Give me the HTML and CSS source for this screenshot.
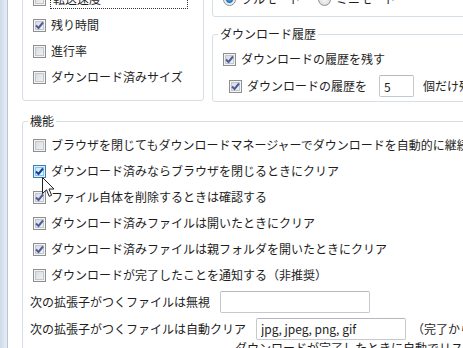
FILE: index.html
```html
<!DOCTYPE html>
<html lang="ja">
<head>
    <meta charset="UTF-8">
    <title>オプション</title>
    <link rel="stylesheet" href="styles.css">
</head>
<body>
    <div class="window">
        <div class="frame"></div>
        <div class="client">
            <div class="top-row">
                <div class="group columns-box">
                    <div class="check-row"><span class="cb"></span><span class="focus">転送速度</span></div>
                    <div class="check-row"><span class="cb checked"><svg viewBox="0 0 11 11"><polyline points="2,5.5 4.5,8 9,2.5"/></svg></span>残り時間</div>
                    <div class="check-row"><span class="cb"></span>進行率</div>
                    <div class="check-row"><span class="cb"></span>ダウンロード済みサイズ</div>
                </div>
                <div class="right-col">
                    <div class="group mode-box">
                        <div class="radio-row">
                            <span class="radio on"></span><span class="radio-label">フルモード</span>
                            <span class="radio"></span><span class="radio-label">ミニモード</span>
                        </div>
                    </div>
                    <fieldset class="group history">
                        <legend>ダウンロード履歴</legend>
                        <div class="check-row"><span class="cb checked"><svg viewBox="0 0 11 11"><polyline points="2,5.5 4.5,8 9,2.5"/></svg></span>ダウンロードの履歴を残す</div>
                        <div class="check-row count-row">
                            <span class="cb checked"><svg viewBox="0 0 11 11"><polyline points="2,5.5 4.5,8 9,2.5"/></svg></span>ダウンロードの履歴を
                            <input class="text-box count" type="text" value="5">
                            <span class="after">個だけ残す</span>
                        </div>
                    </fieldset>
                </div>
            </div>

            <fieldset class="group features">
                <legend>機能</legend>
                <div class="check-row"><span class="cb"></span>ブラウザを閉じてもダウンロードマネージャーでダウンロードを自動的に継続する</div>
                <div class="check-row"><span class="cb checked hot"><svg viewBox="0 0 11 11"><polyline points="2,5.5 4.5,8 9,2.5"/></svg></span>ダウンロード済みならブラウザを閉じるときにクリア</div>
                <div class="check-row"><span class="cb checked"><svg viewBox="0 0 11 11"><polyline points="2,5.5 4.5,8 9,2.5"/></svg></span>ファイル自体を削除するときは確認する</div>
                <div class="check-row"><span class="cb checked"><svg viewBox="0 0 11 11"><polyline points="2,5.5 4.5,8 9,2.5"/></svg></span>ダウンロード済みファイルは開いたときにクリア</div>
                <div class="check-row"><span class="cb checked"><svg viewBox="0 0 11 11"><polyline points="2,5.5 4.5,8 9,2.5"/></svg></span>ダウンロード済みファイルは親フォルダを開いたときにクリア</div>
                <div class="check-row"><span class="cb"></span>ダウンロードが完了したことを通知する（非推奨）</div>
                <div class="field-row">
                    <span>次の拡張子がつくファイルは無視</span>
                    <input class="text-box wide" type="text" value="">
                </div>
                <div class="field-row">
                    <span>次の拡張子がつくファイルは自動クリア</span>
                    <input class="text-box wide" type="text" value="jpg, jpeg, png, gif">
                    <span class="note">（完了から削除）</span>
                </div>
                <div class="hint">ダウンロードが完了したときに自動でリストから削除します</div>
            </fieldset>
        </div>
    </div>

    <svg class="cursor" width="13" height="21" viewBox="0 0 13 21">
        <path d="M0.5,0.5 L0.5,16.5 L4.5,12.8 L7.2,19.3 L9.6,18.3 L7,12 L12,12 Z" fill="#fff" stroke="#222" stroke-width="1" stroke-linejoin="round"/>
    </svg>
</body>
</html>
```

FILE: styles.css
```css
body {
    margin: 0;
    padding: 0;
    background-color: #fff;
    font-family: "Noto Sans CJK JP", "Noto Sans", sans-serif;
    font-size: 12px;
    line-height: 16px;
    color: #1e1e1e;
    overflow: hidden;
    width: 463px;
    height: 348px;
    position: relative;
}

.window {
    display: flex;
    height: 348px;
}

.frame {
    flex: 0 0 7px;
    background: linear-gradient(to right, #cfdbea, #e6edf6);
    border-right: 1px solid #b6c4d6;
}

.client {
    flex: 0 0 auto;
    margin-top: -40px;
    padding-left: 14px;
}

.top-row {
    display: flex;
    align-items: flex-start;
    gap: 8px;
}

.group {
    border: 1px solid #d5dfe5;
    border-radius: 3px;
    margin: 0;
    min-width: 0;
}

fieldset.group legend {
    margin-left: -5px;
    padding: 0 2px;
    line-height: 16px;
}

.columns-box {
    width: 170px;
    padding: 25px 0 10px 10px;
}

.right-col {
    width: 280px;
}

.mode-box {
    padding: 25px 0 4px 10px;
}

.history {
    margin-top: 9px;
    padding: 4px 0 1px 10px;
}

.features {
    width: 480px;
    margin-top: 11px;
    padding: 3px 0 0 10px;
}

.check-row {
    display: flex;
    align-items: center;
    height: 26px;
    white-space: nowrap;
}

.count-row {
    height: 28px;
    margin-left: 6px;
}

.cb {
    flex: 0 0 auto;
    box-sizing: border-box;
    width: 13px;
    height: 13px;
    margin-right: 5px;
    border: 1px solid #8e8f8f;
    background: linear-gradient(135deg, #d3d6da, #f6f6f7);
    box-shadow: inset 0 0 0 1px #f4f4f4, inset 0 0 0 2px #c3c7cc;
    display: flex;
    align-items: center;
    justify-content: center;
}

.cb svg {
    width: 11px;
    height: 11px;
}

.cb polyline {
    fill: none;
    stroke: #4a5e9c;
    stroke-width: 2;
}

.cb.hot {
    border-color: #3c7fb1;
    background: linear-gradient(135deg, #c6e4f8, #f2f9fe);
    box-shadow: inset 0 0 0 1px #def0fc, inset 0 0 0 2px #79c6f9;
}

.cb.hot polyline {
    stroke: #1b3b8e;
}

.focus {
    display: block;
    width: 132px;
    padding: 1px 2px;
    outline: 1px dotted #333;
    outline-offset: 0;
}

.radio-row {
    display: flex;
    align-items: center;
    height: 26px;
    white-space: nowrap;
}

.radio {
    box-sizing: border-box;
    width: 13px;
    height: 13px;
    border-radius: 50%;
    border: 1px solid #8e8f8f;
    background: radial-gradient(circle, #f7f7f7, #d4d6da);
    margin-right: 5px;
}

.radio.on {
    background: radial-gradient(circle, #5fb0e8 0, #1f6fb8 3px, #dfe6ee 4px, #f5f6f8 6px);
}

.radio-label {
    margin-right: 17px;
}

.text-box {
    box-sizing: border-box;
    height: 22px;
    border: 1px solid #c5c9cf;
    border-top-color: #b4b8bf;
    border-radius: 2px;
    padding: 0 4px;
    font-family: inherit;
    font-size: 12px;
    color: #1e1e1e;
    background: #fff;
}

.count {
    width: 35px;
    margin-left: 12px;
}

.after {
    margin-left: 9px;
}

.field-row {
    display: flex;
    align-items: center;
    height: 27px;
    margin-left: -3px;
    white-space: nowrap;
}

.field-row .wide {
    width: 150px;
    margin-left: 10px;
}

.note {
    margin-left: 6px;
}

.hint {
    padding-left: 202px;
    margin-top: -2px;
    white-space: nowrap;
}

.cursor {
    position: absolute;
    left: 42px;
    top: 177px;
}
```
